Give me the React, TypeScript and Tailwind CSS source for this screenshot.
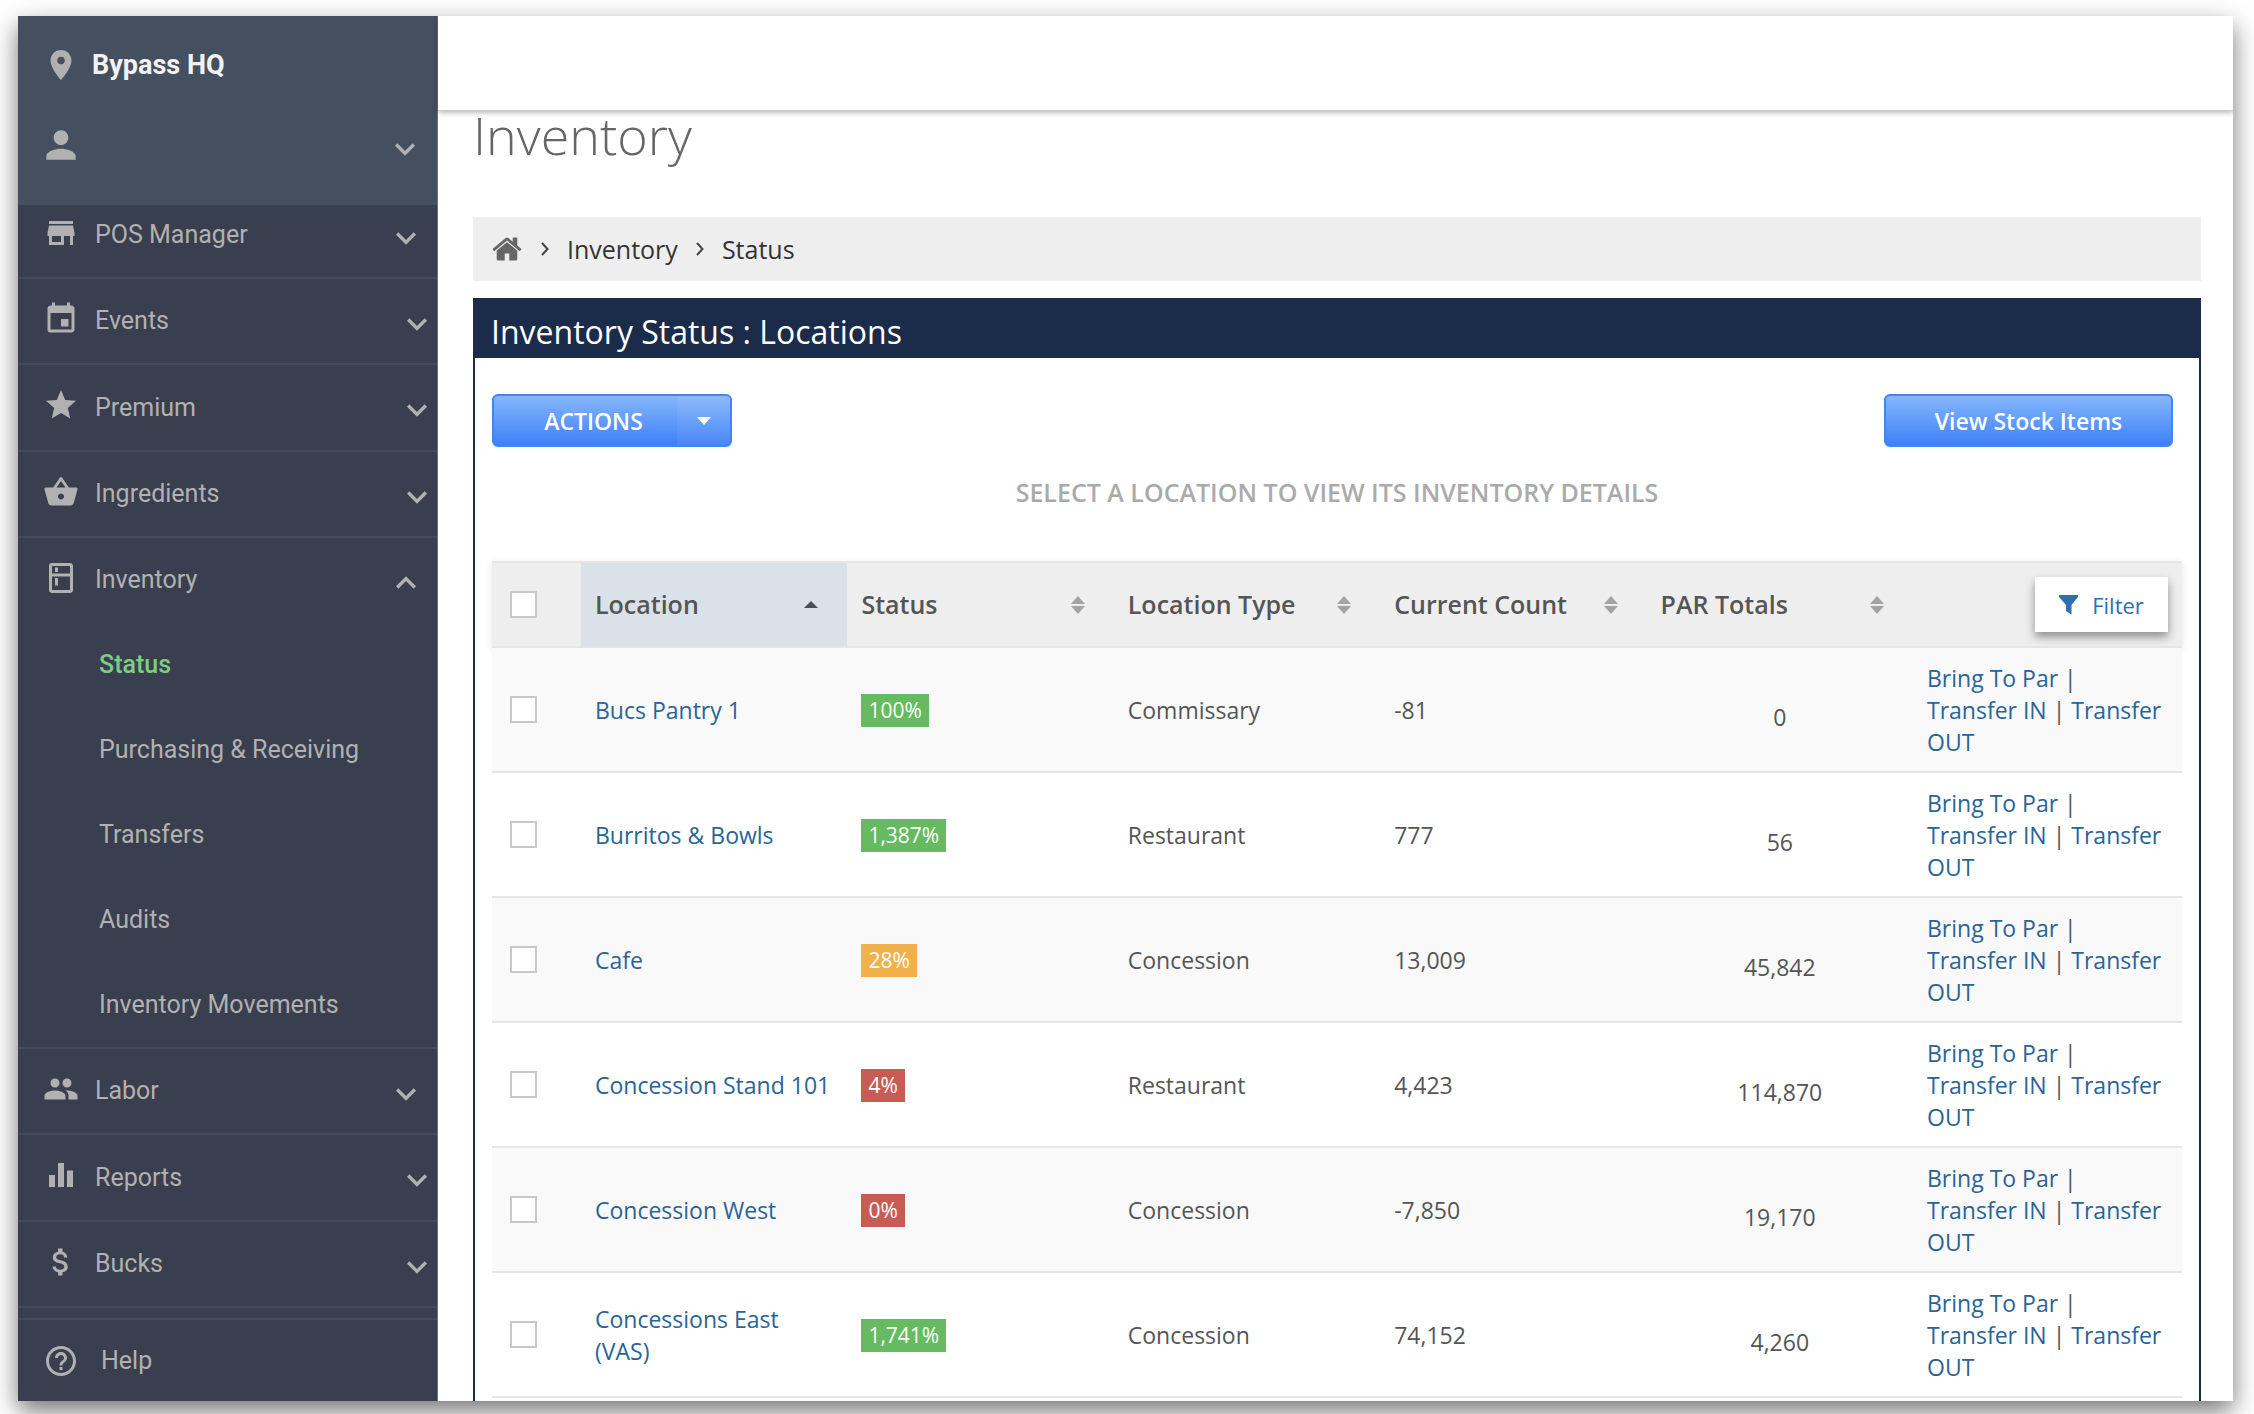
import type { ReactNode } from "react";
import {
  MdAttachMoney,
  MdEqualizer,
  MdEvent,
  MdExpandLess,
  MdExpandMore,
  MdHelpOutline,
  MdOutlineKitchen,
  MdPeople,
  MdPerson,
  MdPlace,
  MdShoppingBasket,
  MdStar,
  MdStore,
} from "react-icons/md";

type NavItem = {
  label: string;
  icon: ReactNode;
  inset?: boolean; // chevron sits a little further from the edge
  children?: string[];
};

type LocationRow = {
  name: string;
  status: string;
  level: "good" | "warn" | "bad";
  type: string;
  count: string;
  par: string;
};

const navItems: NavItem[] = [
  { label: "Events", icon: <MdEvent size={36} /> },
  { label: "Premium", icon: <MdStar size={36} /> },
  { label: "Ingredients", icon: <MdShoppingBasket size={36} /> },
  {
    label: "Inventory",
    icon: <MdOutlineKitchen size={36} />,
    inset: true,
    children: ["Status", "Purchasing & Receiving", "Transfers", "Audits", "Inventory Movements"],
  },
  { label: "Labor", icon: <MdPeople size={36} />, inset: true },
  { label: "Reports", icon: <MdEqualizer size={36} /> },
  { label: "Bucks", icon: <MdAttachMoney size={36} /> },
];

const rows: LocationRow[] = [
  { name: "Bucs Pantry 1", status: "100%", level: "good", type: "Commissary", count: "-81", par: "0" },
  { name: "Burritos & Bowls", status: "1,387%", level: "good", type: "Restaurant", count: "777", par: "56" },
  { name: "Cafe", status: "28%", level: "warn", type: "Concession", count: "13,009", par: "45,842" },
  { name: "Concession Stand 101", status: "4%", level: "bad", type: "Restaurant", count: "4,423", par: "114,870" },
  { name: "Concession West", status: "0%", level: "bad", type: "Concession", count: "-7,850", par: "19,170" },
  { name: "Concessions East (VAS)", status: "1,741%", level: "good", type: "Concession", count: "74,152", par: "4,260" },
];

const levelColors = {
  good: "bg-[#66bb60]",
  warn: "bg-[#f2b04a]",
  bad: "bg-[#c95b55]",
};

const columns = ["Location", "Status", "Location Type", "Current Count", "PAR Totals"];

function NavRow({ item }: { item: NavItem }) {
  return (
    <button className="flex h-[84px] w-full items-center gap-4 pl-[25px] text-left">
      <span className="flex w-9 shrink-0 justify-center pb-1">{item.icon}</span>
      <span className="flex-1">{item.label}</span>
      <span className={item.inset ? "mt-1.5 pr-[11px]" : "mt-1.5"}>
        {item.children ? <MdExpandLess size={40} /> : <MdExpandMore size={40} />}
      </span>
    </button>
  );
}

function Sidebar() {
  return (
    <aside className="flex w-[420px] shrink-0 flex-col border-r border-[#6d7480] bg-[#393f4f] font-[Roboto,sans-serif] text-[25px] text-[#b1b1b1]">
      {/* venue and user */}
      <div className="flex h-[189px] shrink-0 flex-col gap-11 bg-[#444f60] pt-[31px]">
        <div className="flex h-9 items-center gap-[13px] pl-[25px]">
          <MdPlace size={36} />
          <span className="text-[27px] font-bold text-[#f2f2f2]">Bypass HQ</span>
        </div>
        <button aria-label="Account" className="flex h-9 w-full items-center justify-between pl-[21px] pr-3">
          <MdPerson size={44} />
          <MdExpandMore size={40} className="mt-2" />
        </button>
      </div>

      <nav className="flex min-h-0 flex-1 flex-col">
        {/* first entry is partly scrolled under the venue block */}
        <div className="h-[74px] shrink-0 overflow-hidden border-b-2 border-[#414b5b]">
          <div className="-mt-3">
            <NavRow item={{ label: "POS Manager", icon: <MdStore size={36} />, inset: true }} />
          </div>
        </div>
        <ul className="flex flex-1 flex-col">
          {navItems.map((item) => (
            <li key={item.label} className="grow border-b-2 border-[#414b5b]">
              <NavRow item={item} />
              {item.children?.map((child) => (
                <a
                  key={child}
                  href="#"
                  className={
                    child === "Status"
                      ? "flex h-[85px] items-center pl-[81px] font-medium text-[#7fcb83]"
                      : "flex h-[85px] items-center pl-[81px]"
                  }
                >
                  {child}
                </a>
              ))}
            </li>
          ))}
        </ul>
      </nav>

      <a href="#" className="mt-[10px] flex h-[83px] shrink-0 items-center gap-[22px] border-t-2 border-[#414b5b] pl-[25px]">
        <MdHelpOutline size={36} />
        Help
      </a>
    </aside>
  );
}

function CrumbArrow() {
  return (
    <svg width="8" height="14" viewBox="0 0 8 14" fill="none" stroke="#444" strokeWidth="2">
      <path d="M1 1l5.5 6L1 13" />
    </svg>
  );
}

function HomeIcon() {
  return (
    <svg width="32" height="32" viewBox="0 0 1792 1792" fill="#666">
      <path d="M1472 992v480q0 26-19 45t-45 19h-384v-384h-256v384h-384q-26 0-45-19t-19-45v-480q0-1 .5-3t.5-3l575-474 575 474q1 2 1 6zm223-69l-62 74q-8 9-21 11h-3q-13 0-21-7l-692-577-692 577q-12 8-24 7-13-2-21-11l-62-74q-8-10-7-23.5t11-21.5l719-599q32-26 76-26t76 26l244 204v-195q0-14 9-23t23-9h192q14 0 23 9t9 23v408l219 182q10 8 11 21.5t-7 23.5z" />
    </svg>
  );
}

function SortIcon({ active }: { active: boolean }) {
  return (
    <svg width="14" height="18" viewBox="0 0 14 18" fill={active ? "#4a4f55" : "#a3a3a3"}>
      {active ? (
        <path d="M7 5l7 7H0z" />
      ) : (
        <>
          <path d="M7 0l7 8H0z" />
          <path d="M7 18l7-8H0z" />
        </>
      )}
    </svg>
  );
}

function Checkbox({ label }: { label: string }) {
  return (
    <input
      type="checkbox"
      aria-label={label}
      className="block size-[27px] appearance-none border-2 border-[#c8c8c8] bg-white checked:bg-[#286090]"
    />
  );
}

function LocationsTable() {
  return (
    <table className="w-full table-fixed border-separate border-spacing-0 text-left">
      <thead className="shadow-[0_2px_8px_rgba(0,0,0,0.1)]">
        <tr className="h-[87px] bg-[#eee]">
          <th className="w-[89px] border-y-2 border-[#e6e6e6] pl-[18px]">
            <Checkbox label="Select all locations" />
          </th>
          {columns.map((name, i) => (
            <th
              key={name}
              className={
                i === 0
                  ? "border-y-2 border-[#e6e6e6] bg-[#dae1e8] pl-[14px] pr-[29px]"
                  : "border-y-2 border-[#e6e6e6] pl-[14px] pr-[29px]"
              }
            >
              <button className="flex w-full items-center justify-between text-[25px] font-semibold text-[#555]">
                <span className="pb-0.5">{name}</span>
                <SortIcon active={i === 0} />
              </button>
            </th>
          ))}
          <th className="w-[269px] border-y-2 border-[#e6e6e6] pr-[14px]">
            <button className="ml-auto flex h-[55px] w-[133px] items-center justify-center gap-[14px] bg-white text-[22px] font-normal text-[#2f6fae] shadow-[0_5px_9px_rgba(0,0,0,0.4)]">
              <svg width="19" height="20" viewBox="0 0 19 20" fill="currentColor">
                <path d="M0 0h19v2l-6.500 8v9.500L7 16v-6L0 2z" />
              </svg>
              Filter
            </button>
          </th>
        </tr>
      </thead>
      <tbody>
        {rows.map((row) => (
          <tr key={row.name} className="h-[125px] odd:bg-[#f9f9f9] [&>td]:border-b-2 [&>td]:border-[#e6e6e6] [&>td]:px-[14px]">
            <td>
              <div className="pl-1">
                <Checkbox label={`Select ${row.name}`} />
              </div>
            </td>
            <td>
              <a href="#" className="text-[#2a6496]">{row.name}</a>
            </td>
            <td>
              <span className={`inline-block px-[7px] text-[21px] leading-[33px] text-white ${levelColors[row.level]}`}>
                {row.status}
              </span>
            </td>
            <td>{row.type}</td>
            <td>{row.count}</td>
            <td className="pt-[14px] text-center">{row.par}</td>
            <td>
              <a href="#" className="text-[#2a6496]">Bring To Par</a> |<br />
              <a href="#" className="text-[#2a6496]">Transfer IN</a> |{" "}
              <a href="#" className="text-[#2a6496]">Transfer OUT</a>
            </td>
          </tr>
        ))}
      </tbody>
    </table>
  );
}

export default function App() {
  return (
    <div className="h-screen overflow-hidden bg-white pb-[13px] pl-[18px] pr-[21px] pt-4">
      <div className="flex h-full overflow-hidden bg-white shadow-[0_10px_24px_rgba(0,0,0,0.55)]">
        <Sidebar />

        <div className="flex min-w-0 flex-1 flex-col font-['Open_Sans',sans-serif] text-[23px] leading-8 text-[#555]">
          <header className="relative z-10 -mb-4 h-[95px] shrink-0 border-b border-[#ccc] bg-white shadow-[0_1px_6px_rgba(0,0,0,0.35)]" />

          <main className="min-h-0 flex-1 overflow-hidden pl-[35px] pr-8 pt-2">
            <h1 className="text-[52px] font-light leading-[64px] text-[#666]">Inventory</h1>

            <nav aria-label="Breadcrumb" className="mt-[50px] flex h-16 items-center gap-[18px] bg-[#eee] pl-[18px] text-[25px] text-[#333]">
              <a href="#" aria-label="Home"><HomeIcon /></a>
              <CrumbArrow />
              <a href="#">Inventory</a>
              <CrumbArrow />
              <a href="#">Status</a>
            </nav>

            <section className="mt-[17px] border-2 border-[#1b2c4a] pb-9">
              <h2 className="flex h-[58px] items-center bg-[#1b2c4a] pl-4 pt-1.5 text-[32px] text-white">
                Inventory Status : Locations
              </h2>

              <div className="px-[17px] pt-9">
                <div className="flex justify-between pr-[9px] font-semibold text-white">
                  <div className="flex h-[53px] w-[240px] overflow-hidden rounded-md border-2 border-[#4583ee] bg-linear-to-b from-[#86b6fb] to-[#3d7ff6]">
                    <button className="flex-1 pl-4">ACTIONS</button>
                    <button aria-label="More actions" className="flex w-[53px] items-center justify-center bg-white/6">
                      <svg width="14" height="8" viewBox="0 0 14 8" fill="currentColor">
                        <path d="M0 0h14L7 8z" />
                      </svg>
                    </button>
                  </div>
                  <button className="h-[53px] w-[289px] rounded-md border-2 border-[#4583ee] bg-linear-to-b from-[#86b6fb] to-[#3d7ff6]">
                    View Stock Items
                  </button>
                </div>

                <p className="mb-[53px] mt-[29px] text-center text-[25px] font-semibold leading-8 text-[#aaa]">
                  SELECT A LOCATION TO VIEW ITS INVENTORY DETAILS
                </p>

                <LocationsTable />
              </div>
            </section>
          </main>
        </div>
      </div>
    </div>
  );
}
